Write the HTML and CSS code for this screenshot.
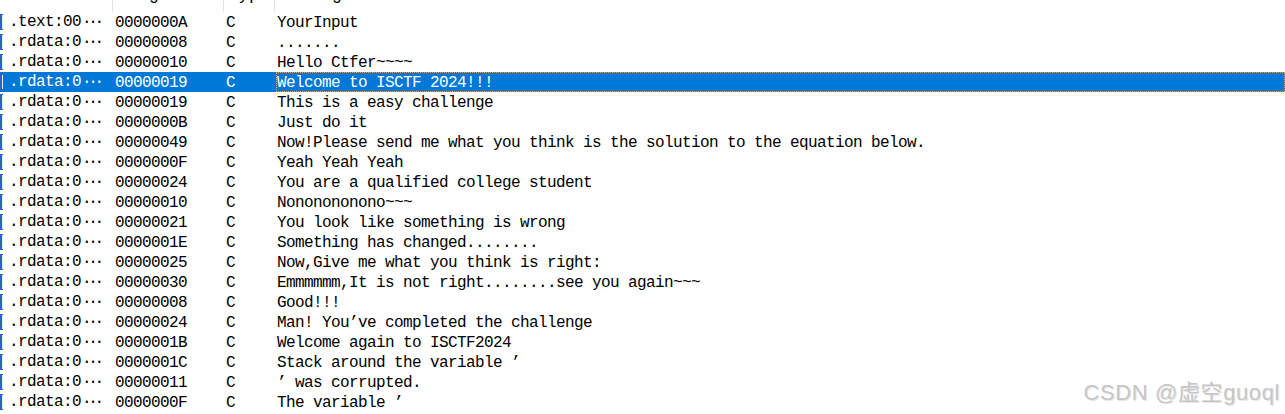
FILE: index.html
```html
<!DOCTYPE html>
<html lang="en">
<head>
<meta charset="utf-8">
<title>Strings</title>
<link rel="stylesheet" href="styles.css">
</head>
<body>
<div class="list">
  <div class="hdr">
    <div class="hc c1"><span class="hl">Address</span></div>
    <div class="hc c2"><span class="hl">Length</span></div>
    <div class="hc c3"><span class="hl">Type</span></div>
    <div class="hc c4"><span class="hl">String</span></div>
  </div>
  <div class="row"><div class="c c1"><i class="ico"></i>.text:00<span class="ell">···</span></div><div class="c c2">0000000A</div><div class="c c3">C</div><div class="c c4">YourInput</div></div>
  <div class="row"><div class="c c1"><i class="ico"></i>.rdata:0<span class="ell">···</span></div><div class="c c2">00000008</div><div class="c c3">C</div><div class="c c4">.......</div></div>
  <div class="row"><div class="c c1"><i class="ico"></i>.rdata:0<span class="ell">···</span></div><div class="c c2">00000010</div><div class="c c3">C</div><div class="c c4">Hello Ctfer~~~~</div></div>
  <div class="row sel"><div class="c c1"><i class="ico"></i>.rdata:0<span class="ell">···</span></div><div class="c c2">00000019</div><div class="c c3">C</div><div class="c c4">Welcome to ISCTF 2024!!!</div></div>
  <div class="row"><div class="c c1"><i class="ico"></i>.rdata:0<span class="ell">···</span></div><div class="c c2">00000019</div><div class="c c3">C</div><div class="c c4">This is a easy challenge</div></div>
  <div class="row"><div class="c c1"><i class="ico"></i>.rdata:0<span class="ell">···</span></div><div class="c c2">0000000B</div><div class="c c3">C</div><div class="c c4">Just do it</div></div>
  <div class="row"><div class="c c1"><i class="ico"></i>.rdata:0<span class="ell">···</span></div><div class="c c2">00000049</div><div class="c c3">C</div><div class="c c4">Now!Please send me what you think is the solution to the equation below.</div></div>
  <div class="row"><div class="c c1"><i class="ico"></i>.rdata:0<span class="ell">···</span></div><div class="c c2">0000000F</div><div class="c c3">C</div><div class="c c4">Yeah Yeah Yeah</div></div>
  <div class="row"><div class="c c1"><i class="ico"></i>.rdata:0<span class="ell">···</span></div><div class="c c2">00000024</div><div class="c c3">C</div><div class="c c4">You are a qualified college student</div></div>
  <div class="row"><div class="c c1"><i class="ico"></i>.rdata:0<span class="ell">···</span></div><div class="c c2">00000010</div><div class="c c3">C</div><div class="c c4">Nononononono~~~</div></div>
  <div class="row"><div class="c c1"><i class="ico"></i>.rdata:0<span class="ell">···</span></div><div class="c c2">00000021</div><div class="c c3">C</div><div class="c c4">You look like something is wrong</div></div>
  <div class="row"><div class="c c1"><i class="ico"></i>.rdata:0<span class="ell">···</span></div><div class="c c2">0000001E</div><div class="c c3">C</div><div class="c c4">Something has changed........</div></div>
  <div class="row"><div class="c c1"><i class="ico"></i>.rdata:0<span class="ell">···</span></div><div class="c c2">00000025</div><div class="c c3">C</div><div class="c c4">Now,Give me what you think is right:</div></div>
  <div class="row"><div class="c c1"><i class="ico"></i>.rdata:0<span class="ell">···</span></div><div class="c c2">00000030</div><div class="c c3">C</div><div class="c c4">Emmmmmm,It is not right........see you again~~~</div></div>
  <div class="row"><div class="c c1"><i class="ico"></i>.rdata:0<span class="ell">···</span></div><div class="c c2">00000008</div><div class="c c3">C</div><div class="c c4">Good!!!</div></div>
  <div class="row"><div class="c c1"><i class="ico"></i>.rdata:0<span class="ell">···</span></div><div class="c c2">00000024</div><div class="c c3">C</div><div class="c c4">Man! You’ve completed the challenge</div></div>
  <div class="row"><div class="c c1"><i class="ico"></i>.rdata:0<span class="ell">···</span></div><div class="c c2">0000001B</div><div class="c c3">C</div><div class="c c4">Welcome again to ISCTF2024</div></div>
  <div class="row"><div class="c c1"><i class="ico"></i>.rdata:0<span class="ell">···</span></div><div class="c c2">0000001C</div><div class="c c3">C</div><div class="c c4">Stack around the variable ’</div></div>
  <div class="row"><div class="c c1"><i class="ico"></i>.rdata:0<span class="ell">···</span></div><div class="c c2">00000011</div><div class="c c3">C</div><div class="c c4">’ was corrupted.</div></div>
  <div class="row"><div class="c c1"><i class="ico"></i>.rdata:0<span class="ell">···</span></div><div class="c c2">0000000F</div><div class="c c3">C</div><div class="c c4">The variable ’</div></div>
</div>
<div class="wm">CSDN @虚空guoql</div>
</body>
</html>
```
FILE: styles.css
```css
html, body {
  margin: 0;
  padding: 0;
  background: #ffffff;
}
body {
  width: 1285px;
  height: 414px;
  overflow: hidden;
  position: relative;
}
.list {
  font-family: "Liberation Mono", "DejaVu Sans Mono", monospace;
  font-size: 16px;
  letter-spacing: -0.6px;
  color: #000000;
}
.hdr, .row {
  display: grid;
  grid-template-columns: 112px 111px 51px 1fr;
}
.hdr {
  height: 12px;
  overflow: hidden;
  font-size: 17.5px;
  letter-spacing: 0;
  color: #000;
}
.hc {
  overflow: hidden;
  white-space: nowrap;
  padding-left: 4px;
}
.hc + .hc {
  border-left: 1px solid #e3e3e3;
}
.hl {
  display: block;
  line-height: 20px;
  margin-top: -16px;
}
.row {
  height: 20px;
  line-height: 22px;
  white-space: nowrap;
}
.c {
  overflow: hidden;
  padding-left: 3px;
}
.c.c1 {
  padding-left: 0;
  display: flex;
  align-items: center;
}
.ico {
  display: inline-block;
  width: 3px;
  height: 16px;
  margin-right: 6px;
  box-sizing: border-box;
  border: 1px solid #2d62c8;
  border-left-width: 2px;
  border-right: none;
  background: #e2f0dc;
}
.ell {
  letter-spacing: -3.4px;
  margin-left: 1px;
}
.sel {
  background: #0078d7;
  color: #ffffff;
}
.sel .c4 {
  margin-left: 2px;
  padding-left: 1px;
  outline: 1px dotted #f7a54a;
  outline-offset: -1px;
}
.wm {
  position: absolute;
  right: 5px;
  bottom: 9px;
  font-family: "Liberation Sans", "Noto Sans CJK SC", sans-serif;
  font-size: 22px;
  letter-spacing: 0.6px;
  line-height: 24px;
  color: #c6c6c6;
  text-shadow: 1px 1px 0 #e6e6e6;
}
```
